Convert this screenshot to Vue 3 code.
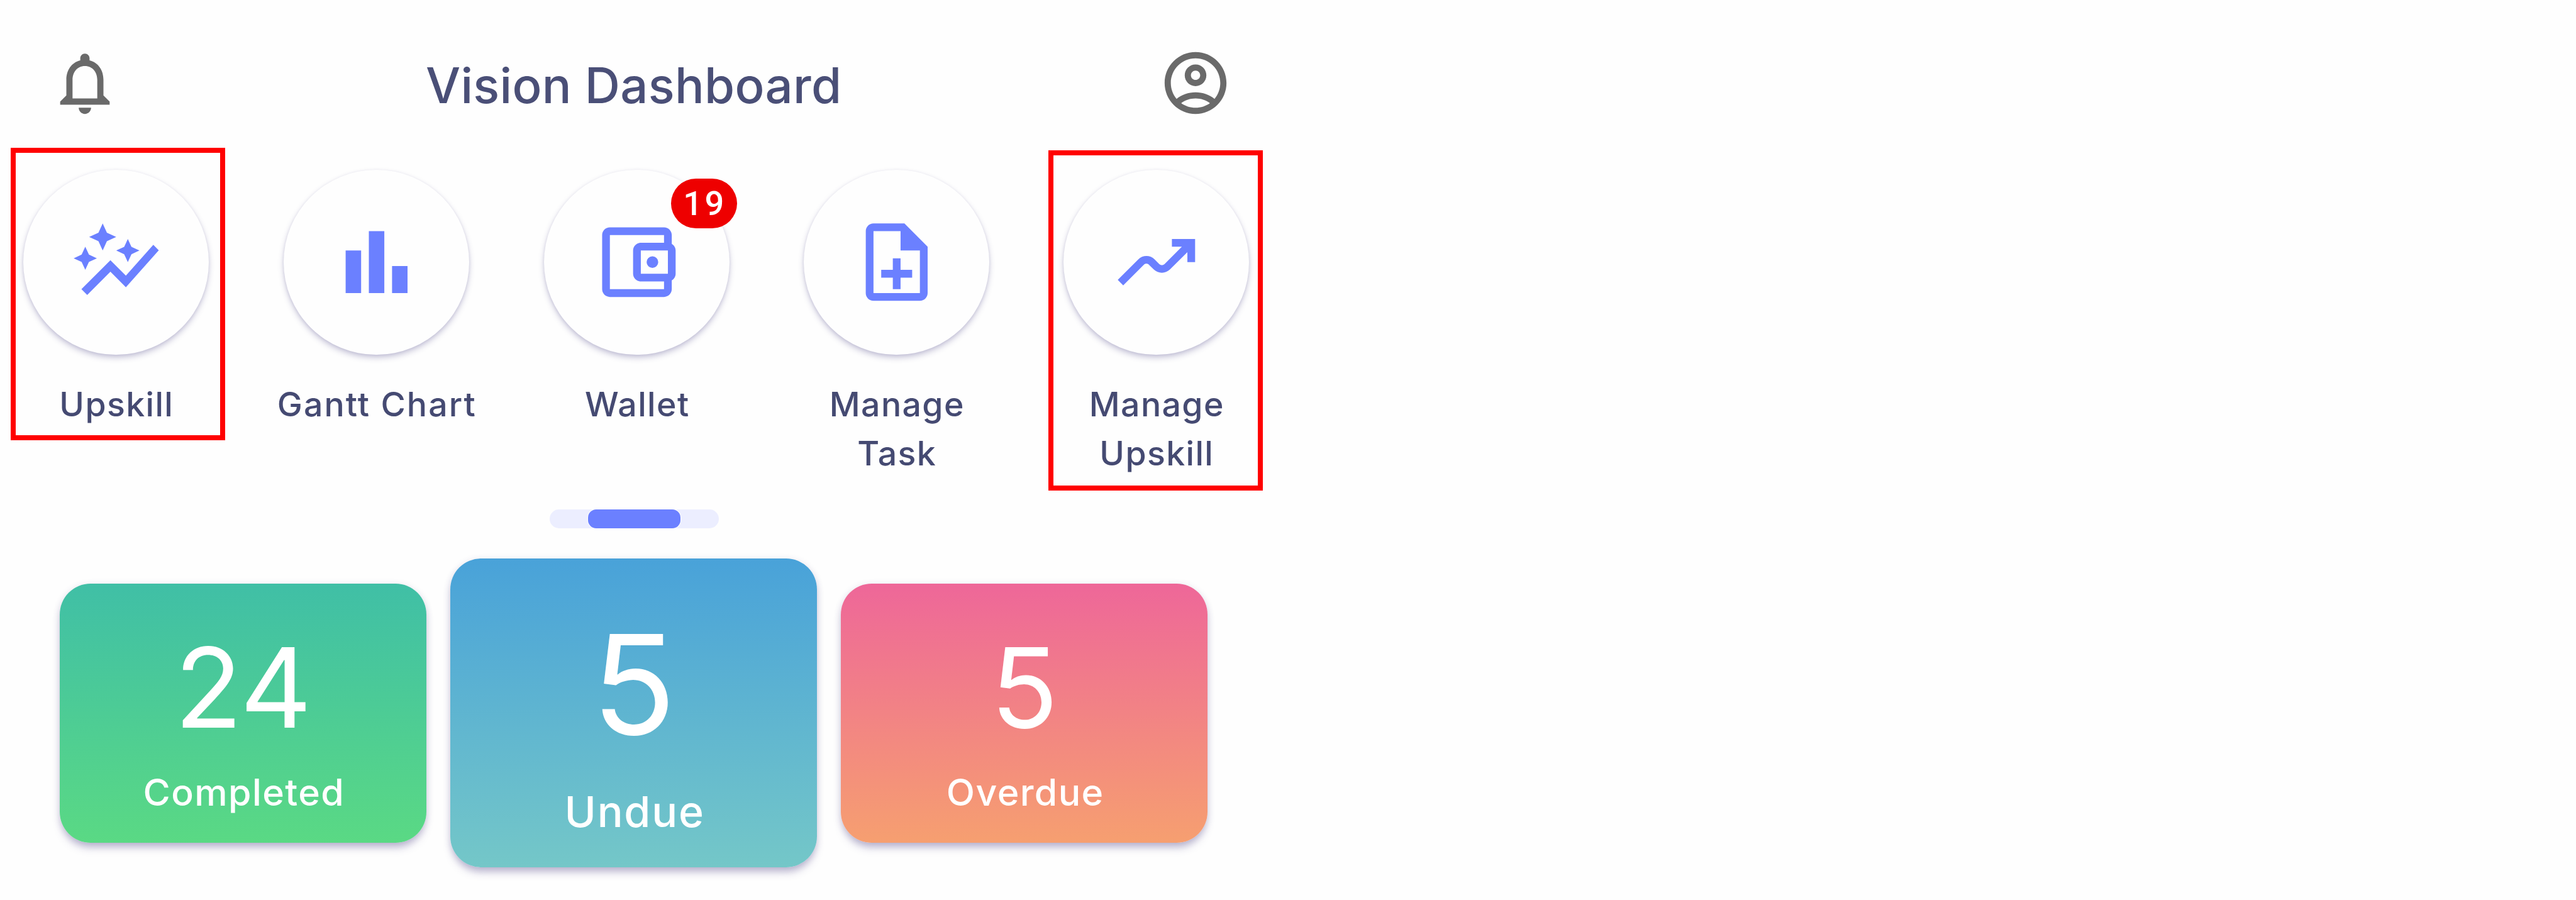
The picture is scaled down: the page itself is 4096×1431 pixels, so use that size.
<script setup>
const shortcuts = [
  {
    label: ['Upskill'],
    icon: 'M14.06 9.94L12 9l2.06-.94L15 6l.94 2.06L18 9l-2.06.94L15 12l-.94-2.06zM4 14l.94-2.06L7 11l-2.06-.94L4 8l-.94 2.06L1 11l2.06.94L4 14zm4.5-5l1.09-2.41L12 5.5 9.59 4.41 8.5 2 7.41 4.41 5 5.5l2.41 1.09L8.5 9zm-4 11.5l6-6.01 4 4L23 8.93l-1.41-1.41-7.09 7.97-4-4L3 19l1.5 1.5z',
    frame: 'frame-first'
  },
  {
    label: ['Gantt Chart'],
    icon: 'M4 9h4v11H4zm12 4h4v7h-4zm-6-9h4v16h-4z',
    wide: true
  },
  {
    label: ['Wallet'],
    icon: 'M21 7.28V5c0-1.1-.9-2-2-2H5c-1.11 0-2 .9-2 2v14c0 1.1.89 2 2 2h14c1.1 0 2-.9 2-2v-2.28c.59-.35 1-.98 1-1.72V9c0-.74-.41-1.37-1-1.72zM20 9v6h-7V9h7zM5 19V5h14v2h-6c-1.1 0-2 .9-2 2v6c0 1.1.9 2 2 2h6v2H5zM14.5 12a1.5 1.5 0 1 0 3 0a1.5 1.5 0 1 0 -3 0z',
    badge: 19
  },
  {
    label: ['Manage', 'Task'],
    icon: 'M14 2H6c-1.1 0-1.99.9-1.99 2L4 20c0 1.1.89 2 1.99 2H18c1.1 0 2-.9 2-2V8l-6-6zm4 18H6V4h7v5h5v11zM11 19h2v-3h3v-2h-3v-3h-2v3H8v2h3z'
  },
  {
    label: ['Manage', 'Upskill'],
    icon: 'M20 9.42V12h2V6h-6v2h2.58l-4.46 4.46c-.39.39-1.02.39-1.41 0l-1.17-1.17c-1.17-1.17-3.07-1.17-4.24 0L2 16.59 3.41 18l5.29-5.29c.39-.39 1.02-.39 1.41 0l1.17 1.17c1.17 1.17 3.07 1.17 4.24 0L20 9.42z',
    frame: 'frame-last'
  }
]

const stats = [
  { value: 24, label: 'Completed', kind: 'completed' },
  { value: 5, label: 'Undue', kind: 'undue' },
  { value: 5, label: 'Overdue', kind: 'overdue' }
]
</script>

<template>
  <main class="screen">
    <header class="topbar">
      <svg class="topbar-icon" viewBox="0 0 24 24">
        <path d="M12 22c1.1 0 2-.9 2-2h-4c0 1.1.9 2 2 2zm6-6v-5c0-3.07-1.63-5.64-4.5-6.32V4c0-.83-.67-1.5-1.5-1.5s-1.5.67-1.5 1.5v.68C7.64 5.36 6 7.92 6 11v5l-2 2v1h16v-1l-2-2zm-2 1H8v-6c0-2.48 1.51-4.5 4-4.5s4 2.02 4 4.5v6z" />
      </svg>
      <h1 class="title">Vision Dashboard</h1>
      <svg class="topbar-icon" viewBox="0 0 24 24">
        <path d="M12 2C6.48 2 2 6.48 2 12s4.48 10 10 10 10-4.48 10-10S17.52 2 12 2zM7.35 18.5C8.66 17.56 10.26 17 12 17s3.34.56 4.65 1.5C15.34 19.44 13.74 20 12 20s-3.34-.56-4.65-1.5zm10.79-1.38C16.45 15.8 14.32 15 12 15s-4.45.8-6.14 2.12C4.7 15.73 4 13.95 4 12c0-4.42 3.58-8 8-8s8 3.58 8 8c0 1.95-.7 3.73-1.86 5.12zM12 6c-1.93 0-3.5 1.57-3.5 3.5S10.07 13 12 13s3.5-1.57 3.5-3.5S13.93 6 12 6zm0 5c-.83 0-1.5-.67-1.5-1.5S11.17 8 12 8s1.5.67 1.5 1.5S12.83 11 12 11z" />
      </svg>
    </header>

    <nav class="shortcuts">
      <div v-for="(s, i) in shortcuts" :key="i" class="shortcut">
        <div class="bubble">
          <svg class="bubble-icon" viewBox="0 0 24 24"><path fill-rule="evenodd" :d="s.icon" /></svg>
          <span v-if="s.badge" class="badge">{{ s.badge }}</span>
        </div>
        <div class="caption" :class="{ wide: s.wide }">
          <div v-for="line in s.label" :key="line">{{ line }}</div>
        </div>
        <div v-if="s.frame" class="frame" :class="s.frame"></div>
      </div>
    </nav>

    <div class="track"><div class="thumb"></div></div>

    <section class="stats">
      <article v-for="c in stats" :key="c.kind" class="card" :class="c.kind">
        <div class="value">{{ c.value }}</div>
        <div class="name">{{ c.label }}</div>
      </article>
    </section>
  </main>
</template>

<style>
html,
body {
  background: #fefefe;
}
</style>

<style scoped>
.screen {
  box-sizing: border-box;
  width: 4096px;
  height: 1431px;
  overflow: hidden;
  background: #fefefe;
  font-family: Inter, "Liberation Sans", sans-serif;
}

.topbar {
  box-sizing: border-box;
  display: flex;
  justify-content: space-between;
  width: 1960px;
  height: 269.7px;
  padding: 73px 0 0 76.3px;
}

.topbar-icon {
  width: 118px;
  height: 118px;
  fill: #6a6a6a;
}

.title {
  margin: 24.7px 0 0 -21px;
  color: #4a4f77;
  font-size: 77.8px;
  line-height: 77.6px;
  font-weight: 470;
  letter-spacing: 0.3px;
}

.shortcuts {
  display: grid;
  grid-template-columns: 295px 295px 295px 293px 295px;
  column-gap: 119px;
  height: 490.5px;
  margin-left: 37px;
}

.shortcut {
  position: relative;
  display: flex;
  flex-direction: column;
  align-items: center;
}

.bubble {
  position: relative;
  display: flex;
  flex: none;
  align-items: center;
  justify-content: center;
  width: 294.6px;
  height: 294.6px;
  border-radius: 50%;
  background: #fefefe;
  box-shadow: 0 5px 10px rgba(70, 60, 130, 0.28), 0 1px 4px rgba(70, 60, 130, 0.1);
}

.bubble-icon {
  width: 147.6px;
  height: 147.6px;
  fill: #6b80ff;
}

.badge {
  position: absolute;
  top: 14.3px;
  left: 201.5px;
  box-sizing: border-box;
  width: 105.7px;
  height: 79px;
  padding: 12.6px 0 0 2px;
  border-radius: 39.5px;
  background: #ee0000;
  color: #fff;
  font: 500 54.1px/54.1px Roboto, sans-serif;
  letter-spacing: 3.6px;
  text-align: center;
}

.caption {
  margin-top: 39.7px;
  padding-left: 1.6px;
  color: #454a72;
  font-size: 53.6px;
  line-height: 78.2px;
  font-weight: 450;
  letter-spacing: 1.4px;
  text-align: center;
  white-space: nowrap;
}

.caption.wide {
  letter-spacing: 2.1px;
}

.frame {
  position: absolute;
  box-sizing: border-box;
  width: 341.3px;
  border: 8px solid #ff0000;
}

.frame-first {
  top: -34.6px;
  left: -20.1px;
  height: 465.3px;
}

.frame-last {
  top: -30.6px;
  left: -24.4px;
  height: 540.6px;
}

.track {
  display: flex;
  justify-content: center;
  width: 269.6px;
  height: 30.4px;
  margin: 49.6px 0 0 873.6px;
  border-radius: 15.2px;
  background: #eceeff;
}

.thumb {
  width: 146.5px;
  border-radius: 13px;
  background: #6b80ff;
  box-shadow: 0 0 0 1px #fefefe;
}

.stats {
  display: flex;
  align-items: center;
  gap: 38.6px;
  height: 491px;
  margin: 48.1px 0 0 95.1px;
}

.card {
  box-sizing: border-box;
  width: 582.6px;
  height: 412.4px;
  padding-top: 77.6px;
  border-radius: 49px;
  color: #fff;
  text-align: center;
  box-shadow: 0 10px 14px -3px rgba(70, 60, 130, 0.34), 0 2px 12px rgba(70, 60, 130, 0.14);
}

.value {
  font-size: 176.6px;
  line-height: 177.2px;
  letter-spacing: -0.5px;
}

.name {
  margin-top: 48.1px;
  padding-left: 3px;
  font-size: 59px;
  line-height: 59px;
  font-weight: 450;
  letter-spacing: 1.4px;
}

.completed {
  background: linear-gradient(#40bfa6, #5ad984);
}

.undue {
  height: 491px;
  padding-top: 88.6px;
  background: linear-gradient(#49a2d9, #74c7c8);
}

.undue .value {
  font-size: 220.6px;
  line-height: 221px;
}

.undue .name {
  margin-top: 58px;
  font-size: 68px;
  line-height: 68px;
  letter-spacing: 1.8px;
}

.overdue {
  background: linear-gradient(#ee6799, #f69f70);
}
</style>
